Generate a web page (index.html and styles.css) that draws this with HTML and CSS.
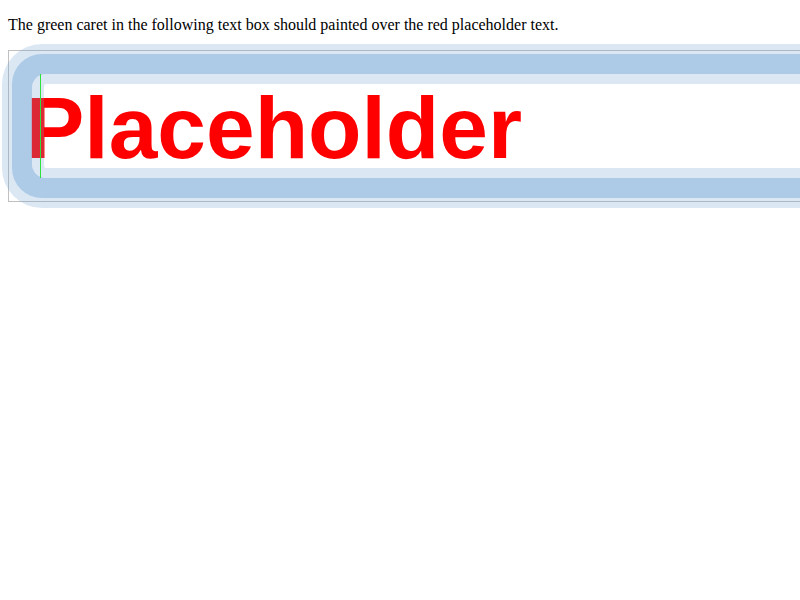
FILE: index.html
```html
<!DOCTYPE html>
<html>
<head>
<meta charset="utf-8">
<link rel="stylesheet" href="styles.css">
</head>
<body>
<p class="intro">The green caret in the following text box should painted over the red placeholder text.</p>
<div class="frame">
  <div class="ring">
    <div class="field">
      <span class="placeholder">Placeholder</span>
      <span class="caret"></span>
    </div>
  </div>
</div>
</body>
</html>
```
FILE: styles.css
```css
html {
  overflow: hidden;
}
body {
  margin: 0;
  padding: 8px;
  font-family: "Liberation Serif", "Times New Roman", serif;
  font-size: 16px;
  background: #fff;
  color: #000;
}
.intro {
  margin: 8px 0 16px;
  line-height: 18px;
}
.frame {
  margin-right: -8px;
  border: 1px solid #c0c0c0;
  border-right: 0;
  padding: 3px 0 3px 3px;
}
.ring {
  background: #adcbe7;
  border-radius: 30px 0 0 30px;
  padding: 20px 0 20px 20px;
  box-shadow: 0 0 0 10px rgba(113, 162, 210, 0.25);
}
.field {
  position: relative;
  height: 104px;
  background: #fff;
  border-radius: 14px 0 0 14px;
  font-family: "Liberation Sans", Arial, sans-serif;
  font-weight: bold;
  font-size: 87.5px;
  line-height: 109px;
  color: #ff0000;
  white-space: nowrap;
  text-indent: -6px;
}
.field::after {
  content: "";
  position: absolute;
  inset: 0;
  border-style: solid;
  border-color: rgba(113, 162, 210, 0.25);
  border-width: 10px 0 10px 12px;
  border-radius: 14px 0 0 14px;
  pointer-events: none;
}
.caret {
  position: absolute;
  left: 8px;
  top: 0;
  bottom: 0;
  width: 1px;
  background: #2ee03a;
  z-index: 1;
}
```
